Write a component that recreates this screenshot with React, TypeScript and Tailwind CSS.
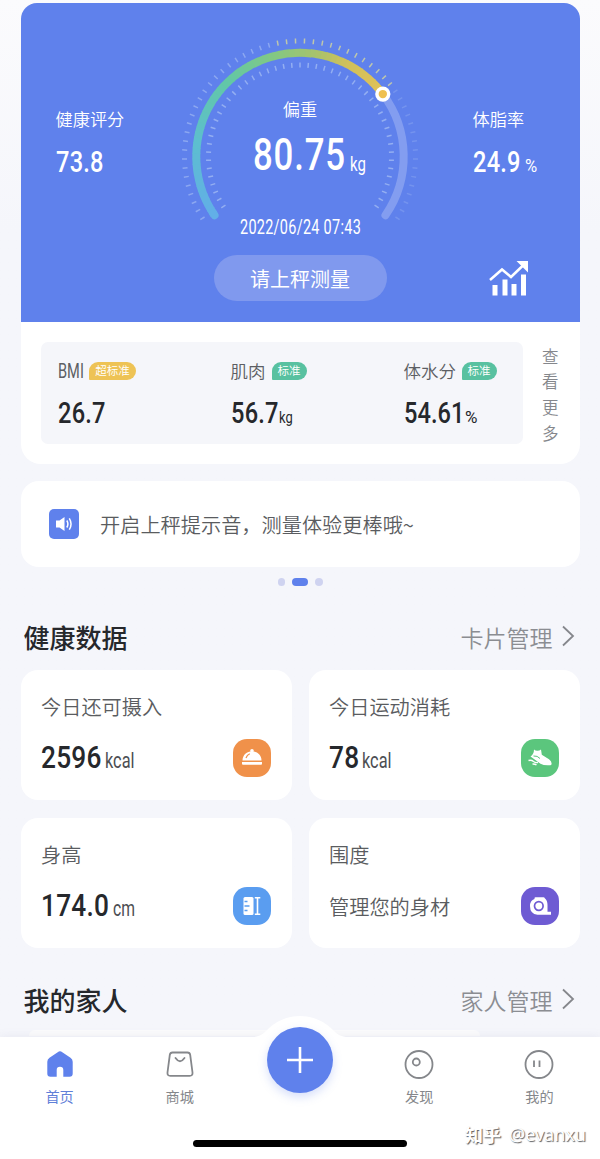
import type { ReactNode } from 'react';

const STOPS: [number, number[]][] = [
  [-126, [98, 174, 232]],
  [-85, [93, 190, 208]],
  [-45, [98, 200, 166]],
  [-15, [132, 200, 130]],
  [8, [168, 194, 108]],
  [25, [208, 192, 90]],
  [54, [226, 194, 88]],
];

function colorAt(a: number) {
  for (let i = 1; i < STOPS.length; i++) {
    const [a1, c1] = STOPS[i];
    const [a0, c0] = STOPS[i - 1];
    if (a <= a1) {
      const t = Math.max(0, (a - a0) / (a1 - a0));
      return `rgb(${c0.map((v, k) => Math.round(v + (c1[k] - v) * t)).join(',')})`;
    }
  }
  return 'rgb(226,194,88)';
}

const CX = 120;
const CY = 153.5;
const R = 103.7;

function pt(a: number, r: number) {
  const t = (a * Math.PI) / 180;
  return [CX + r * Math.sin(t), CY - r * Math.cos(t)];
}

function arc(a0: number, a1: number, r: number) {
  const [x0, y0] = pt(a0, r);
  const [x1, y1] = pt(a1, r);
  return `M${x0} ${y0}A${r} ${r} 0 0 1 ${x1} ${y1}`;
}

function Ticks({ angles, r, len, outer }: { angles: number[]; r: number; len: number; outer?: boolean }) {
  return (
    <g strokeWidth="1.5">
      {angles.map((a) => {
        const [x0, y0] = pt(a, r - len / 2);
        const [x1, y1] = pt(a, r + len / 2);
        const done = a < 54;
        return (
          <line
            key={a}
            x1={x0}
            y1={y0}
            x2={x1}
            y2={y1}
            stroke={outer && a > -12 && done ? '#d6d89c' : '#c8dbf8'}
            opacity={outer ? (a > -12 && done ? 0.8 : done ? 0.42 : 0.2) : 0.5}
          />
        );
      })}
    </g>
  );
}

const OUTER = Array.from({ length: 56 }, (_, i) => (i - 27.5) * 4.45);
const INNER = Array.from({ length: 49 }, (_, i) => (i - 24) * 5.13);

function Gauge() {
  const [kx, ky] = pt(53, R);
  const steps = Array.from({ length: 60 }, (_, i) => -124 + i * 2.95);
  return (
    <svg className="absolute left-0 top-0" width="240" height="252" viewBox="0 0 240 252" fill="none">
      <Ticks angles={OUTER} r={115.5} len={5} outer />
      <Ticks angles={INNER} r={91.5} len={5} />
      <path d={arc(53, 124.5, R)} stroke="#839df0" strokeWidth="8" strokeLinecap="round" />
      <path d={arc(-124.5, -123, R)} stroke={colorAt(-124)} strokeWidth="8" strokeLinecap="round" />
      {steps.map((a) => (
        <path key={a} d={arc(a, Math.min(a + 3.4, 53), R)} stroke={colorAt(a)} strokeWidth="8" />
      ))}
      <circle cx={kx} cy={ky} r="7.6" fill="#fff" />
      <circle cx={kx} cy={ky} r="4.2" fill="#efc04f" />
    </svg>
  );
}

/* Condensed Latin text: `box` reserves the narrowed width. */
function Num({ children, box, className }: { children: string; box: string; className: string }) {
  return (
    <span className={`inline-block shrink-0 whitespace-nowrap ${box}`}>
      <span className={`inline-block origin-left font-[Roboto,sans-serif] ${className}`}>{children}</span>
    </span>
  );
}

function Tag({ children, className }: { children: string; className: string }) {
  return (
    <span
      className={`flex h-[18px] items-center justify-center rounded-t-[9px] rounded-br-[9px] rounded-bl-[1px] pb-px text-[11.5px] leading-none text-white ${className}`}
    >
      {children}
    </span>
  );
}

function Metric({ label, tag, value, unit, className }: { label: ReactNode; tag: ReactNode; value: ReactNode; unit?: ReactNode; className: string }) {
  return (
    <div className={`flex flex-col ${className}`}>
      <div className="flex h-6 items-center text-[17.5px] font-[350] text-[#5c5e63]">
        {label}
        {tag}
      </div>
      <div className="mt-[14px] flex h-8 items-baseline leading-8 text-[#26282c]">
        {value}
        {unit}
      </div>
    </div>
  );
}

function SectionTitle({ title, action }: { title: string; action: string }) {
  return (
    <div className="flex h-9 items-center justify-between pl-[3px] pr-[5px]">
      <h2 className="text-[26px] font-medium leading-9 text-[#26282c]">{title}</h2>
      <div className="flex items-center text-[23px] font-[350] leading-9 text-[#8b8d92]">
        {action}
        <svg className="-mt-[3px] ml-2" width="14" height="22" viewBox="0 0 14 22" fill="none" stroke="#85878c" strokeWidth="1.8">
          <path d="M2 1.5l10 9.5-10 9.5" />
        </svg>
      </div>
    </div>
  );
}

function Card({ label, value, icon, bg }: { label: string; value: ReactNode; icon: ReactNode; bg: string }) {
  return (
    <div className="flex h-[130.5px] flex-col rounded-[17px] bg-white pl-[20.5px] pr-[20.5px] pt-[22px]">
      <div className="h-[30px] text-[20.2px] font-[350] leading-[30px] text-[#5a5c60]">{label}</div>
      <div className="mt-[17px] flex h-[38px] items-center justify-between">
        <div className="flex items-baseline leading-[38px] text-[#26282c]">{value}</div>
        <div className={`flex h-[38px] w-[38px] items-center justify-center rounded-[14px] ${bg}`}>{icon}</div>
      </div>
    </div>
  );
}

function Tab({ label, icon, active }: { label: string; icon: ReactNode; active?: boolean }) {
  return (
    <div className={`flex flex-1 flex-col items-center pr-px pt-[13px] ${active ? 'text-[#5f80d8]' : 'text-[#85878b]'}`}>
      {icon}
      <span className="mt-[6px] text-[14.2px] leading-5">{label}</span>
    </div>
  );
}

export default function App() {
  return (
    <div className="relative flex h-[1159px] w-[600px] flex-col overflow-hidden bg-[#f5f6fb] bg-gradient-to-b from-[#fbfbfd] from-0% to-[#f5f6fb] to-20% font-['Noto_Sans_CJK_SC',sans-serif]">
      <main className="flex flex-1 flex-col px-[20.5px] pt-[3px]">
        <section className="flex h-[461px] shrink-0 flex-col overflow-hidden rounded-t-[16px] rounded-b-[20px] bg-white">
          <div className="h-[318.5px] bg-[#5f81ec] text-white">
            <div className="grid h-[252px] grid-cols-[1fr_240px_1fr]">
              <div className="flex flex-col pl-[35px] pt-[104px]">
                <span className="h-6 text-[17.2px] font-[350] leading-6">健康评分</span>
                <div className="mt-[15px] flex h-8 items-baseline leading-8">
                  <Num box="w-[48px]" className="scale-x-[0.8] text-[29.5px] font-medium tracking-[0.3px]">73.8</Num>
                </div>
              </div>
              <div className="relative flex flex-col items-center">
                <Gauge />
                <span className="mt-[94px] h-6 text-[17.2px] font-[350] leading-6">偏重</span>
                <div className="mt-[14px] flex h-[42px] items-baseline pl-[18px] leading-[42px]">
                  <Num box="w-[97px]" className="scale-x-[0.8] text-[43.5px] font-medium leading-[42px] tracking-[1px]">80.75</Num>
                  <Num box="w-[16px]" className="translate-y-px scale-x-[0.73] text-[20.5px] leading-5">kg</Num>
                </div>
                <div className="mt-[39px] flex h-6 items-center">
                  <Num box="w-[121px]" className="scale-x-[0.74] text-[19.5px] tracking-[0.4px]">2022/06/24 07:43</Num>
                </div>
              </div>
              <div className="flex flex-col pl-[52.5px] pt-[104px]">
                <span className="h-6 text-[17.2px] font-[350] leading-6">体脂率</span>
                <div className="mt-[15px] flex h-8 items-baseline leading-8">
                  <Num box="w-[52px]" className="scale-x-[0.8] text-[29.5px] font-medium tracking-[0.3px]">24.9</Num>
                  <Num box="w-[14px]" className="scale-x-[0.95] text-[17.5px]">%</Num>
                </div>
              </div>
            </div>
            <div className="grid grid-cols-[1fr_240px_1fr]">
              <span />
              <button className="mx-auto h-[46px] w-[173px] rounded-full bg-[#8099ee] pt-px text-[20px] leading-[46px]">请上秤测量</button>
              <svg className="ml-[69px] mt-[5px]" width="40" height="37" viewBox="0 0 40 37" fill="#fff">
                <path d="M1 20L13 9.500l9 7.500L35 4.500" fill="none" stroke="#fff" strokeWidth="2.500" />
                <path d="M27.500 1H39v11.500z" />
                <path d="M3.500 25h5v10.500h-5zM13.500 19.500h5v16h-5zM22.500 24h5v11.500h-5zM32 14.500h5v21h-5z" />
              </svg>
            </div>
          </div>
          <div className="flex pl-[20px] pt-[20.5px]">
            <div className="flex h-[102px] w-[482.5px] rounded-[7px] bg-[#f5f6fa] pt-[17px]">
              <Metric
                className="ml-[17px] w-[173px]"
                label={<Num box="w-[26px]" className="translate-y-px scale-x-[0.75] text-[19.5px] font-normal">BMI</Num>}
                tag={<Tag className="ml-[5.5px] w-[47px] bg-[#eec355]">超标准</Tag>}
                value={<Num box="w-[48px]" className="scale-x-[0.8] text-[29.5px] font-medium tracking-[0.3px]">26.7</Num>}
              />
              <Metric
                className="w-[173px]"
                label="肌肉"
                tag={<Tag className="ml-[6px] w-[35px] bg-[#58c1a0]">标准</Tag>}
                value={<Num box="w-[48.5px]" className="scale-x-[0.8] text-[29.5px] font-medium tracking-[0.3px]">56.7</Num>}
                unit={<Num box="w-[13px]" className="scale-x-[0.76] text-[17px]">kg</Num>}
              />
              <Metric
                className="w-[110px]"
                label="体水分"
                tag={<Tag className="ml-[5.500px] w-[35px] bg-[#58c1a0]">标准</Tag>}
                value={<Num box="w-[61.5px]" className="scale-x-[0.8] text-[29.5px] font-medium tracking-[0.1px]">54.61</Num>}
                unit={<Num box="w-[14px]" className="scale-x-[1] text-[17px]">%</Num>}
              />
            </div>
            <div className="ml-[19px] mt-[1.5px] flex w-[17px] flex-col text-[16.5px] font-[350] leading-[25.700px] text-[#85878c]">
              <span>查</span>
              <span>看</span>
              <span>更</span>
              <span>多</span>
            </div>
          </div>
        </section>

        <section className="mt-[17px] flex h-[86px] shrink-0 items-center rounded-[18px] bg-white pl-[28.500px]">
          <span className="flex h-[30px] w-[30px] items-center justify-center rounded-[5px] bg-[#5f81ec]">
            <svg width="18" height="16" viewBox="0 0 18 16" fill="#fff">
              <path d="M1 4.500h3.500L9.500 1v14l-5-3.500H1z" />
              <path d="M11.800 4.500q2.200 3.500 0 7M14.300 2.300q3.500 5.700 0 11.400" fill="none" stroke="#fff" strokeWidth="1.500" />
            </svg>
          </span>
          <span className="ml-[21px] pt-[3px] text-[20.2px] font-[350] text-[#5a5c60]">开启上秤提示音，测量体验更棒哦~</span>
        </section>

        <div className="mt-[11px] flex h-2 shrink-0 items-center justify-center gap-[7px]">
          <i className="h-[7.500px] w-[7.500px] rounded-full bg-[#cfd3f0]" />
          <i className="h-2 w-4 rounded-full bg-[#5f81ec]" />
          <i className="h-[7.500px] w-[7.500px] rounded-full bg-[#cfd3f0]" />
        </div>

        <div className="mt-[33px]">
          <SectionTitle title="健康数据" action="卡片管理" />
        </div>
        <section className="mt-[14.500px] grid grid-cols-2 gap-x-[17px] gap-y-[17.500px]">
          <Card
            label="今日还可摄入"
            bg="bg-[#f0914a]"
            value={
              <>
                <Num box="w-[64px]" className="translate-y-px scale-x-[0.82] text-[32px] font-medium tracking-[0.3px]">2596</Num>
                <Num box="w-[30px]" className="translate-y-px scale-x-[0.76] text-[21.500px] text-[#4c4e52]">kcal</Num>
              </>
            }
            icon={
              <svg width="22" height="20" viewBox="0 0 22 20" fill="#fff">
                <circle cx="11" cy="2.700" r="1.800" />
                <path d="M1.500 12.500C1.500 7 6 3.300 11 3.300s9.500 3.700 9.500 9.200z" />
                <path d="M1 14h20v1.800q0 1-1 1H2q-1 0-1-1z" />
                <path d="M5 10q1-3 3.800-4.200" fill="none" stroke="#f0914a" strokeWidth="1.200" />
              </svg>
            }
          />
          <Card
            label="今日运动消耗"
            bg="bg-[#5bc67d]"
            value={
              <>
                <Num box="w-[33px]" className="translate-y-px scale-x-[0.82] text-[32px] font-medium tracking-[0.3px]">78</Num>
                <Num box="w-[30px]" className="translate-y-px scale-x-[0.76] text-[21.500px] text-[#4c4e52]">kcal</Num>
              </>
            }
            icon={
              <svg width="24" height="20" viewBox="0 0 24 20" fill="#fff">
                <path d="M6 1.500q1.500 1.300 3.500 1.200 2 0 3.500-1.200l.8 5.200 7.200 4.500q3 2 2.500 5-.1 1-1.300 1-6.200.500-9.700-1.500L2.500 8.500q3.500-2.500 3.500-7z" />
                <path d="M5.500 8q4-.5 6.500 2.500" stroke="#5bc67d" strokeWidth="1" fill="none" />
                <path d="M.5 12.500q3-.8 5 1 2 1.500 4.500 1M4.500 16q2.500-.2 4 1" fill="none" stroke="#fff" strokeWidth="1.400" />
              </svg>
            }
          />
          <Card
            label="身高"
            bg="bg-[#5a9df0]"
            value={
              <>
                <Num box="w-[71.500px]" className="translate-y-px scale-x-[0.82] text-[32px] font-medium tracking-[0.3px]">174.0</Num>
                <Num box="w-[24px]" className="translate-y-px scale-x-[0.73] text-[21.500px] text-[#4c4e52]">cm</Num>
              </>
            }
            icon={
              <svg width="20" height="20" viewBox="0 0 20 20" fill="none">
                <rect x="1.500" y="1" width="10" height="18" rx="1.500" fill="#fff" />
                <path d="M2.500 5.500h3M2.500 10h5M2.500 14.500h3" stroke="#5a9df0" strokeWidth="1.300" />
                <path d="M12.800 1.700h5.500M12.800 18.300h5.500M15.500 2v16" stroke="#fff" strokeWidth="1.600" />
              </svg>
            }
          />
          <Card
            label="围度"
            bg="bg-[#6e5bd3]"
            value={<span className="pt-[2px] text-[20.200px] font-[350] text-[#5a5c60]">管理您的身材</span>}
            icon={
              <svg width="22" height="20" viewBox="0 0 22 20" fill="none">
                <path
                  d="M1 10Q1 4.500 5.500 3V2.200Q5.500 1.200 6.500 1.200h8q1 0 1.300 1Q18.500 4.500 18.500 9v6.700H22v3H8.500Q1 18 1 10z"
                  fill="#fff"
                />
                <circle cx="9.800" cy="10" r="4.300" stroke="#6e5bd3" strokeWidth="1.700" />
              </svg>
            }
          />
        </section>

        <div className="mt-[34px]">
          <SectionTitle title="我的家人" action="家人管理" />
        </div>
        <div className="ml-2 mr-[100px] mt-[12px] h-[6px] shrink-0 rounded-t-[10px] bg-[#fbfbfc]" />
      </main>

      <nav className="relative h-[122px] w-full shrink-0 bg-white shadow-[0_-2px_8px_rgba(110,120,150,0.08)]">
        <svg className="absolute -top-[22px] left-[236px]" width="128" height="24" viewBox="0 0 128 24" fill="#fff">
          <path d="M18 22Q25 21 29.500 16.500Q44 1 64 1t34.500 15.500q4.500 4.500 11.500 5.500v2H18z" />
        </svg>
        <div className="flex">
          <Tab
            active
            label="首页"
            icon={
              <svg width="30" height="30" viewBox="0 0 30 30" fill="#5f81ec">
                <path d="M12.700 2.200q2.300-1.700 4.600 0l8.200 5.500q2.200 1.700 2.200 4V23.500q0 3.200-3.200 3.200H18.300V20q0-3.300-3.300-3.300T11.700 20v6.700H5.500q-3.200 0-3.200-3.200V11.700q0-2.300 2.200-4z" />
              </svg>
            }
          />
          <Tab
            label="商城"
            icon={
              <svg width="30" height="30" viewBox="0 0 30 30" fill="none" stroke="#85878b" strokeWidth="1.800">
                <path d="M7.500 2.500h15q2.300 0 2.700 2.300l2.300 17.700q.4 3.300-2.800 3.300H5.300q-3.200 0-2.800-3.300L4.800 4.800q.4-2.300 2.700-2.300z" />
                <path d="M10.500 8q4.500 6.500 9 0" strokeLinecap="round" />
              </svg>
            }
          />
          <span className="flex-1" />
          <Tab
            label="发现"
            icon={
              <svg width="30" height="30" viewBox="0 0 30 30" fill="none" stroke="#85878b" strokeWidth="1.800">
                <circle cx="15" cy="14.500" r="13.500" />
                <circle cx="12.300" cy="12" r="3.500" />
              </svg>
            }
          />
          <Tab
            label="我的"
            icon={
              <svg width="30" height="30" viewBox="0 0 30 30" fill="none" stroke="#85878b" strokeWidth="1.800">
                <circle cx="15" cy="14.500" r="13.500" />
                <path d="M10 10.500v6.500M15.500 10.500v6.500" />
              </svg>
            }
          />
        </div>
        <div className="absolute -top-[10px] left-[267px] flex h-[66px] w-[66px] items-center justify-center rounded-full bg-[#5f81ec] shadow-[0_4px_10px_rgba(95,129,236,0.25)]">
          <svg width="26" height="26" viewBox="0 0 26 26" stroke="#fff" strokeWidth="2.600">
            <path d="M13 0v26M0 13h26" />
          </svg>
        </div>
        <div className="absolute left-[193px] top-[103px] h-[7px] w-[214px] rounded-full bg-black" />
        <div className="absolute left-[465px] top-[85px] flex whitespace-nowrap text-[18px] leading-6 text-white [text-shadow:1px_1px_1px_#5c5e62]">
          <span className="w-[44px] font-bold">知乎</span>
          <span className="font-['Noto_Sans',sans-serif] text-[18px]">@evanxu</span>
        </div>
      </nav>
    </div>
  );
}
